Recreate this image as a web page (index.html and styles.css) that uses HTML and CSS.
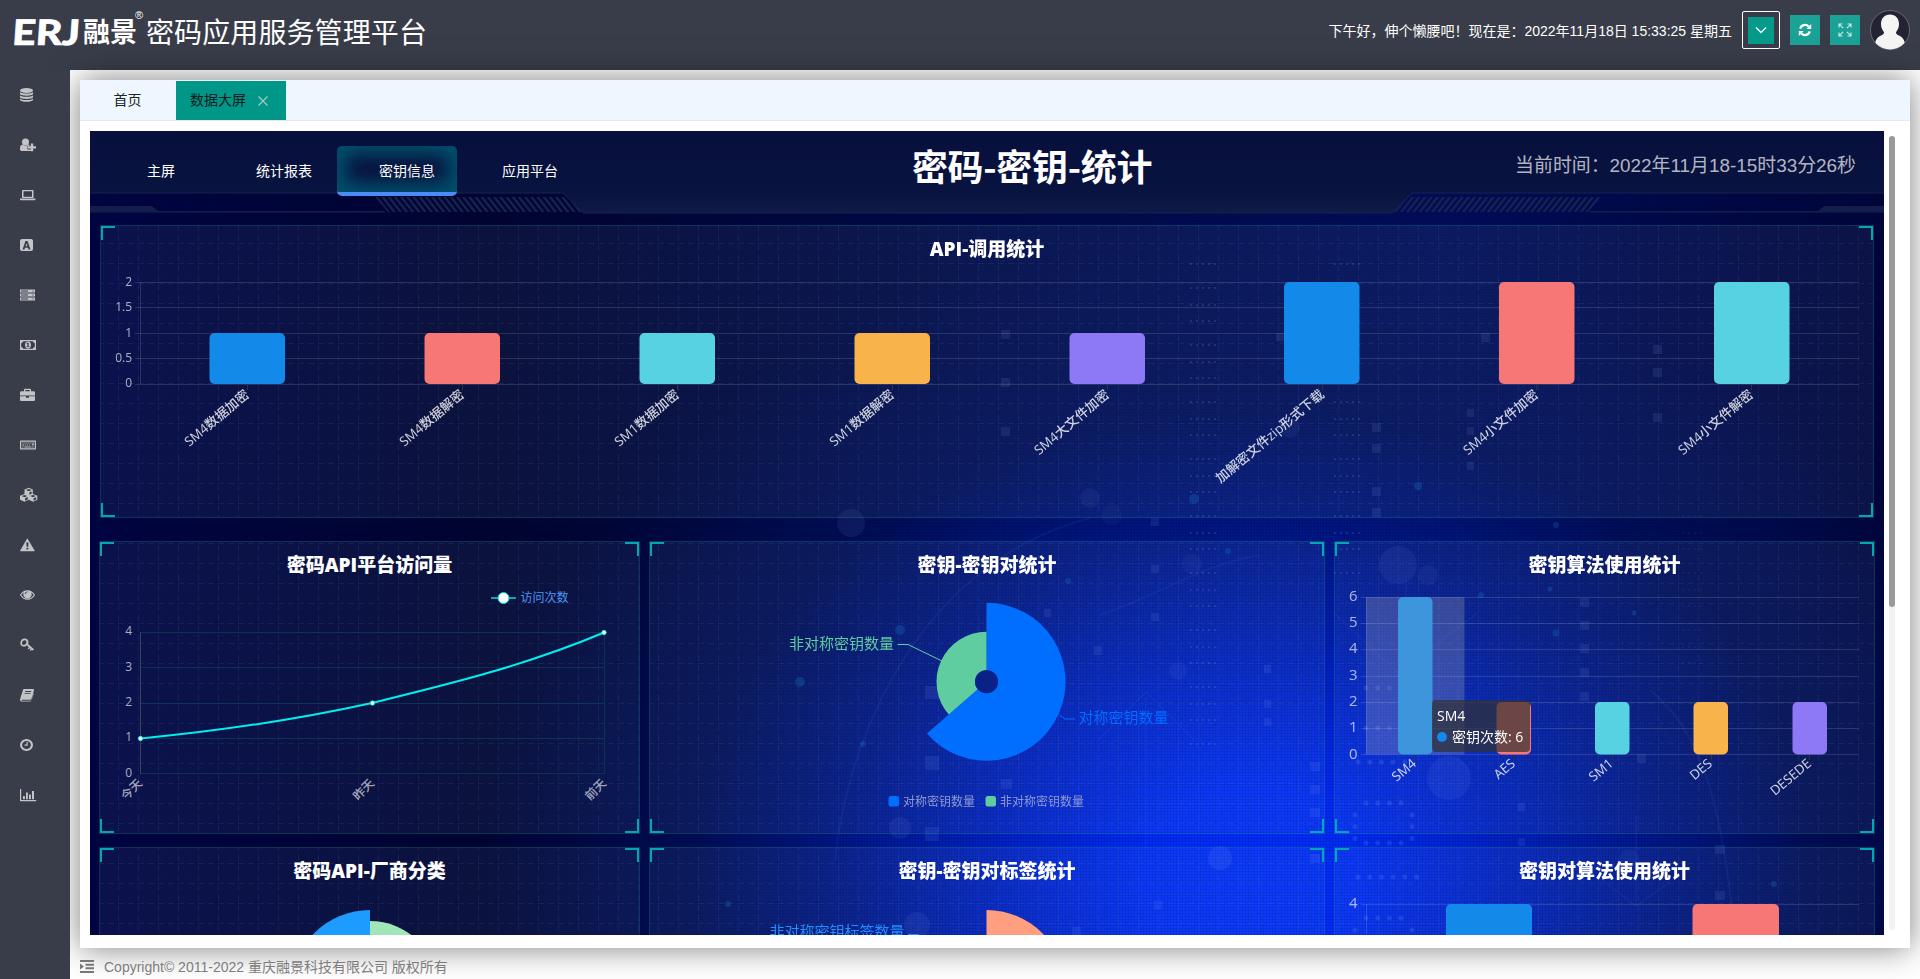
FILE: index.html
```html
<!DOCTYPE html>
<html lang="zh-CN">
<head>
<meta charset="utf-8">
<title>密码应用服务管理平台</title>
<link rel="stylesheet" href="styles.css">
</head>
<body>
<header class="topbar">
  <div class="logo"><span class="logo-erj">ERJ</span><span class="logo-cn">融景</span><sup class="logo-reg">®</sup><span class="logo-name">密码应用服务管理平台</span></div>
  <div class="tools">
    <span class="greeting">下午好，伸个懒腰吧！现在是：2022年11月18日 15:33:25 星期五</span>
    <span class="btn-outline"><span class="btn-inner"><svg width="14" height="14" viewBox="0 0 14 14"><path d="M2 4.5l5 5 5-5" fill="none" stroke="#fff" stroke-width="1.3"/></svg></span></span>
    <span class="btn"><svg width="14" height="14" viewBox="0 0 14 14"><path d="M2.2 5.6A5 5 0 0 1 10.6 3.4M11.8 8.4A5 5 0 0 1 3.4 10.6" fill="none" stroke="#fff" stroke-width="2.2"/><path d="M13.2 1v5H8.2zM.8 13V8h5z" fill="#fff"/></svg></span>
    <span class="btn"><svg width="14" height="14" viewBox="0 0 14 14"><path d="M1 4.5V1h3.5M9.5 1H13v3.500M13 9.500V13H9.500M4.500 13H1V9.500M1.300 1.300l3.800 3.800M12.700 1.300L8.900 5.100M12.700 12.700L8.900 8.900M1.300 12.700l3.800-3.800" fill="none" stroke="#c9f0ea" stroke-width="1.1"/></svg></span>
    <svg class="avatar" viewBox="0 0 40 40"><defs><clipPath id="av"><circle cx="20" cy="20" r="19.500"/></clipPath></defs><circle cx="20" cy="20" r="19.500" fill="#232334" stroke="#73757f" stroke-width=".8"/><g fill="#f5f5f5" clip-path="url(#av)"><path d="M20 4.500c5.500 0 9 4 9 9.500 0 4-1.500 6-3 8.200 0 1.500.8 2.300 2.500 3 4 1.600 6.500 5 6.500 10V40H5v-4.800c0-5 2.500-8.400 6.500-10 1.700-.7 2.500-1.500 2.500-3-1.500-2.200-3-4.200-3-8.200 0-5.500 3.500-9.500 9-9.500z"/></g></svg>
  </div>
</header>
<div class="body">
  <nav class="sidebar">
    <svg viewBox="0 0 18 16"><ellipse cx="6.500" cy="3.500" rx="6.500" ry="2.500"/><path d="M0 5c1.500 2 11.500 2 13 0v2c-1 2.200-12 2.200-13 0zM0 8.300c1.500 2 11.500 2 13 0v2c-1 2.200-12 2.200-13 0zM0 11.600c1.500 2 11.500 2 13 0V13c-1 2.400-12 2.400-13 0z"/></svg>
    <svg viewBox="0 0 18 16"><circle cx="5.500" cy="5" r="3.500"/><path d="M2.500 7.500c2 1.800 4 1.800 6 0 .8.200 1 .8 1.200 1.500H7.500v3.500H11V14H1.500C.3 14-.1 13 0 11.500c.1-2 .8-3.800 2.500-4zM10.800 6.500h2.400v2.800h2.800v2.200h-2.800v2.800h-2.400v-2.800H8V9.300h2.800z"/></svg>
    <svg viewBox="0 0 18 16"><path fill-rule="evenodd" d="M3 3h9.500c.6 0 1 .4 1 1v7H2V4c0-.6.400-1 1-1zm.5 1.300v5.500H12V4.300zM0 11.500h15.500v1c0 .500-.6.800-1.200.8H1.200c-.6 0-1.200-.3-1.200-.8z"/></svg>
    <svg viewBox="0 0 18 16"><path fill-rule="evenodd" d="M2 2h9c1.200 0 2 .8 2 2v8c0 1.200-.8 2-2 2H2c-1.200 0-2-.8-2-2V4c0-1.200.8-2 2-2zm3.500 2L2.500 12.500h2l.5-1.700h3l.5 1.700h2L7.500 4zm1 2.200l.9 3h-1.800z"/></svg>
    <svg viewBox="0 0 18 16"><path fill-rule="evenodd" d="M0 2.500h15v3H0zm1 1v1h7v-1zm11.500 0v1h1v-1zM0 6.500h15v3H0zm1 1v1h7v-1zm11.500 0v1h1v-1zM0 10.500h15v3H0zm1 1v1h7v-1zm11.500 0v1h1v-1z"/></svg>
    <svg viewBox="0 0 18 16"><path fill-rule="evenodd" d="M0 3h16v10H0zm3 1.200C3 5.300 2.200 6 1.200 6v4c1 0 1.800.7 1.800 1.800h10c0-1.100.8-1.800 1.800-1.800V6c-1 0-1.800-.7-1.800-1.800z"/><path fill-rule="evenodd" d="M8 4.500c1.900 0 3 1.500 3 3.500s-1.100 3.500-3 3.500S5 10 5 8s1.100-3.500 3-3.500zm-.6 1.300l-1 .9.500.6.500-.3v2.200h-.8v.8h2.800v-.8h-.8V5.800z"/></svg>
    <svg viewBox="0 0 18 16"><path fill-rule="evenodd" d="M5 1.800h5c.6 0 1 .4 1 1v1.400h2.600c.8 0 1.400.6 1.400 1.300V8.500H0v-3c0-.7.600-1.300 1.400-1.300H4V2.800c0-.6.400-1 1-1zm.3 1.200v1.200h4.400V3zM0 9.300h6v1.400h3V9.300h6v3.400c0 .7-.6 1.300-1.400 1.300H1.400C.6 14 0 13.400 0 12.700z"/></svg>
    <svg viewBox="0 0 18 16"><path fill-rule="evenodd" d="M1 3.500h14c.6 0 1 .4 1 1v7c0 .6-.4 1-1 1H1c-.6 0-1-.4-1-1v-7c0-.6.400-1 1-1zm.2 1.200v6.600h13.600V4.700zM2.300 5.500h1.200v1H2.300zm2 0h1.200v1H4.300zm2 0h1.200v1H6.300zm2 0h1.200v1H8.300zm2 0h1.200v1h-1.200zm2 0h1.400v3h-2v-1h.8zM2.300 7.500h1.700v1H2.300zm2.400 0h1.200v1H4.700zm2 0h1.200v1H6.700zm2 0h1.200v1H8.700zM2.300 9.500h1.200v1H2.300zm2 0h7.200v1H4.300zm8 0h1.400v1h-1.400z"/></svg>
    <svg viewBox="0 0 18 16"><path fill-rule="evenodd" d="M8.800.8l4 1.700v4.400l4.500 1.900v4l-4.300 2-4.200-2-4.300 2-4.500-2v-4l4.500-1.900V2.500zm0 1.100L6 3l2.800 1.200L11.600 3zm.6 3.400v2.500l2.200-1V4.400zM4.500 8L1.800 9.100l2.700 1.200 2.800-1.200zm.6 3.300v2.500l2.700-1.300v-2.400zM13 8l-2.800 1.100 2.800 1.200 2.700-1.200zm.6 3.300v2.500l2.500-1.300v-2.300z"/></svg>
    <svg viewBox="0 0 18 16"><path fill-rule="evenodd" d="M7.300 1.200L14.600 13.500c.2.500 0 .8-.5.800H.7c-.500 0-.8-.3-.5-.8zM6.300 5.500l.3 4.200h1.600l.3-4.200zm.2 5.300v1.700h1.800v-1.700z"/></svg>
    <svg viewBox="0 0 18 16"><path fill-rule="evenodd" d="M7.500 3.200c3.300 0 5.800 2 7.500 4.800-1.700 2.800-4.200 4.800-7.500 4.800S1.700 10.800 0 8c1.700-2.800 4.200-4.800 7.500-4.800zM4 5.300C2.800 6 2 6.900 1.300 8c1.400 2.200 3.500 3.700 6.200 3.700s4.800-1.500 6.200-3.700c-.7-1.100-1.500-2-2.700-2.700.5.700.7 1.400.7 2.200 0 2.300-1.900 4-4.200 4s-4.200-1.700-4.200-4c0-.8.200-1.500.7-2.200zm3.500-.8c-1.500 0-2.800 1.200-2.800 2.800h.8c0-1.100.9-2 2-2z"/></svg>
    <svg viewBox="0 0 18 16"><path fill-rule="evenodd" d="M4.500 1.500c2.500 0 4 1.600 4 3.600 0 .8-.2 1.300-.5 1.900l6 5.200-1.200 1.300-1-.8-1.100 1.400-1-.9 1-1.300-.8-.7-1.200 1.300-1-.8 1.200-1.400-2.200-2c-.6.800-1.400 1.300-2.500 1.300C2.200 9.600.3 8.500.3 6.200c0-2.700 1.900-4.700 4.200-4.700zm.2 1.700c-1.500 0-2.800 1.400-2.700 3 0 1 .7 1.700 1.600 1.700 1.500 0 2.900-1.500 2.900-3 0-1-.8-1.700-1.800-1.700z"/></svg>
    <svg viewBox="0 0 18 16"><path fill-rule="evenodd" d="M4.500 2h8.300c1 0 1.400.7 1.100 1.600l-2.500 8.200c-.2.700-.8 1-1.500 1H2c-.4 0-.7.200-.6.500.1.300.4.400.8.400h8.300c.6 0 .9-.3 1-.8L13.300 6c.4.400.4.900.2 1.500l-2 5.700c-.3.900-.9 1.300-1.800 1.300H2c-1.400 0-2.400-1-1.900-2.400L2.800 3.400C3 2.500 3.600 2 4.500 2zm.9 2l-.3.900h6l.3-.9zm-.7 2.200l-.3.900h6l.3-.9z"/></svg>
    <svg viewBox="0 0 18 16"><path fill-rule="evenodd" d="M6.500 2a6.500 6 0 1 1 0 12 6.500 6 0 0 1 0-12zm0 2a4.400 4 0 1 0 0 8 4.400 4 0 0 0 0-8zm0 1h1.200v3.700H4.500V7.500h2z"/></svg>
    <svg viewBox="0 0 18 16"><path d="M0 2h1.200v11h15v1.200H0zM3 9h1.900v3.200H3zM6 5.500h1.900v6.700H6zM9 7.500h1.900v4.700H9zM12 4h2v8.200h-2z"/></svg>
  </nav>
  <main class="main">
    <section class="card">
      <div class="tabs">
        <span class="tab">首页</span>
        <span class="tab tab-on">数据大屏<svg width="10" height="10" viewBox="0 0 10 10"><path d="M.5.5l9 9M9.500.5l-9 9" stroke="#a9c9c4" stroke-width="1.200"/></svg></span>
      </div>
      <div class="frame">
        <div class="dash">
          <svg class="decor" viewBox="90 131 1794 804">
            <defs>
              <pattern id="hl" width="6.200" height="14" patternUnits="userSpaceOnUse" patternTransform="translate(375 197) skewX(38)"><rect width="3" height="14" fill="#182250"/></pattern>
              <pattern id="hr" width="6.200" height="14" patternUnits="userSpaceOnUse" patternTransform="translate(1399 197) skewX(-38)"><rect width="3" height="14" fill="#182250"/></pattern>
              <pattern id="dots" width="6" height="57" patternUnits="userSpaceOnUse"><path d="M2 3h2M2 20h2M2 36h2" stroke="#8fb0ff" stroke-width="2" opacity=".15"/></pattern>
              <pattern id="mesh" width="20" height="20" patternUnits="userSpaceOnUse" patternTransform="translate(98 243)"><path d="M0 .5h6M10 .5h6M.5 2v6M.5 12v6" stroke="#8db4ff" stroke-width="1"/></pattern>
              <linearGradient id="hd" x1="0" y1="0" x2="0" y2="1"><stop offset="0" stop-color="#07103c"/><stop offset=".75" stop-color="#09133f"/><stop offset="1" stop-color="#101a48"/></linearGradient>
            </defs>
            <path d="M101 226H1873V517H101zM100 542H639V832H100zM650 542H1324V832H650zM1335 542H1874V832H1335zM100 848H639V935H100zM650 848H1324V935H650zM1335 848H1874V935H1335z" fill="url(#mesh)" opacity=".085"/>
            <g fill="#9db8ff" opacity=".1">
              <path d="M1001 330h9v9h-9zM1001 378h9v9h-9zM1001 427h9v9h-9zM1481 333h9v9h-9zM1653 345h9v9h-9zM1653 368h9v9h-9zM1653 413h9v9h-9zM1372 423h9v9h-9zM1372 444h9v9h-9zM1372 487h9v9h-9zM1372 508h9v9h-9zM1467 409h7v8h-7zM1467 427h7v8h-7zM1467 462h7v8h-7zM1276 333h8v8h-8z"/>
              <path d="M1151 518h8v8h-8zM1151 565h8v8h-8zM1151 613h8v8h-8zM1094 646h8v9h-8zM1044 609h7v8h-7zM925 686h14v13h-14zM925 756h14v14h-14zM1001 779h11v10h-11zM925 827h14v14h-14zM1264 665h7v8h-7zM1264 700h7v8h-7zM1264 718h7v8h-7zM1580 598h9v9h-9zM1580 621h9v9h-9zM1580 644h9v9h-9zM1580 668h9v9h-9zM1580 692h9v9h-9zM1637 754h9v9h-9zM1310 762h10v9h-10zM1310 785h10v9h-10zM1310 808h10v9h-10zM1310 854h10v9h-10zM1518 803h7v8h-7zM1518 838h7v8h-7zM1715 845h10v9h-10zM1715 891h10v9h-10zM1154 901h8v8h-8zM1072 927h9v8h-9z"/>
              <circle cx="851" cy="523" r="14" opacity=".8"/><circle cx="1398" cy="565" r="19" opacity=".7"/><circle cx="1428" cy="575" r="10" opacity=".6"/><circle cx="1449" cy="778" r="22" opacity=".8"/><circle cx="1220" cy="858" r="12"/><circle cx="900" cy="828" r="11" opacity=".8"/><circle cx="917" cy="925" r="13" opacity=".8"/><circle cx="1178" cy="671" r="9" opacity=".6"/><circle cx="1192" cy="564" r="10" opacity=".5"/><circle cx="1290" cy="428" r="10" opacity=".6"/><circle cx="1090" cy="498" r="10" opacity=".6"/><circle cx="1629" cy="858" r="9" opacity=".6"/><circle cx="1112" cy="515" r="10" opacity=".4"/>
            </g>
            <g fill="#128fd0" opacity=".22"><circle cx="1418" cy="486" r="4"/><circle cx="1194" cy="499" r="5"/><circle cx="1556" cy="525" r="3"/><circle cx="1556" cy="633" r="3.500"/><circle cx="900" cy="630" r="5"/><circle cx="800" cy="682" r="5"/><circle cx="863" cy="744" r="3"/><circle cx="1550" cy="589" r="2.500"/><circle cx="1634" cy="613" r="2.500"/><circle cx="1481" cy="595" r="3"/><circle cx="1774" cy="884" r="3"/><circle cx="728" cy="904" r="3"/><circle cx="1068" cy="581" r="3"/><circle cx="1228" cy="551" r="3"/></g>
            <g fill="url(#dots)"><rect x="1187" y="260" width="33" height="495"/><rect x="1330" y="252" width="30" height="325"/><rect x="1682" y="494" width="22" height="170" opacity=".4"/></g>
            <g fill="none" stroke="#9db8ff" stroke-width="5" stroke-linecap="round" stroke-dasharray="0 11.700" opacity=".14"><path d="M1366 688h36M1366 728h36M1358 762h48M1366 803h36M1355 815v34M1412 815v34M1366 843h36M1358 877h60M1366 918h36M1355 930h1M1412 930h1"/></g>
            <g fill="none" stroke="#5a8cff" opacity=".13"><path d="M1146 697v152M1098 740l48-48 48 48M1406 580v40M1332 611l66 62 82-62M1636 816v90l-34-26M1636 906l34-24"/><path d="M835 860C850 720 930 560 1090 518M1100 615c60-20 100-50 160-60M1650 690c50 40 70 110 82 220" stroke-width="2" opacity=".6"/></g>
            <path d="M90 131H1884V193H1412L1392 213H583L563 193H90z" fill="url(#hd)"/>
            <path d="M90 193H563L583 213H1392L1412 193H1884" fill="none" stroke="#19234f"/>
            <path d="M375 197H566L582 212H388z" fill="url(#hl)"/><path d="M1408 197H1601L1588 212H1394z" fill="url(#hr)"/>
            <path d="M90 206h62l6 5h227v1.500H90zM1884 206h-60l-6 5h-228v1.500h294z" fill="#141e4c"/>
          </svg>
          <div class="dash-head">
            <div class="menu"><span>主屏</span><span>统计报表</span><span class="on">密钥信息</span><span>应用平台</span></div>
            <h1>密码-密钥-统计</h1>
            <div class="clock">当前时间：2022年11月18-15时33分26秒</div>
          </div>

          <div class="panel panel-wide"><i></i><b></b>
            <h3>API-调用统计</h3>
            <svg class="chart" viewBox="101 272 1772 245" width="1772" height="245">
              <path class="grid" d="M135 282.500H1859M135 307.500H1859M135 333.500H1859M135 358.500H1859M135 384.500H1859M140.500 282V384"/>
              <path class="tick" d="M247.500 385v5M462.500 385v5M677.500 385v5M892.500 385v5M1107.500 385v5M1322.500 385v5M1536.500 385v5M1751.500 385v5"/>
              <g class="ylab"><text x="132" y="285.500">2</text><text x="132" y="311">1.5</text><text x="132" y="336.500">1</text><text x="132" y="362">0.5</text><text x="132" y="387">0</text></g>
              <rect x="209.500" y="333" width="75.500" height="51" rx="5" fill="#138aea"/><rect x="424.500" y="333" width="75.500" height="51" rx="5" fill="#f67776"/><rect x="639.500" y="333" width="75.500" height="51" rx="5" fill="#57d2e3"/><rect x="854.500" y="333" width="75.500" height="51" rx="5" fill="#f8b34b"/><rect x="1069.500" y="333" width="75.500" height="51" rx="5" fill="#8d79f6"/><rect x="1284" y="282" width="75.500" height="102" rx="5" fill="#138aea"/><rect x="1499" y="282" width="75.500" height="102" rx="5" fill="#f67776"/><rect x="1714" y="282" width="75.500" height="102" rx="5" fill="#57d2e3"/>
              <g class="xlab">
                <text transform="translate(250 396) rotate(-40)">SM4数据加密</text><text transform="translate(465 396) rotate(-40)">SM4数据解密</text><text transform="translate(680 396) rotate(-40)">SM1数据加密</text><text transform="translate(895 396) rotate(-40)">SM1数据解密</text><text transform="translate(1110 396) rotate(-40)">SM4大文件加密</text><text transform="translate(1325 396) rotate(-40)">加解密文件zip形式下载</text><text transform="translate(1539 396) rotate(-40)">SM4小文件加密</text><text transform="translate(1754 396) rotate(-40)">SM4小文件解密</text>
              </g>
            </svg>
          </div>

          <div class="row">
            <div class="panel"><i></i><b></b>
              <h3>密码API平台访问量</h3>
              <svg class="chart" viewBox="100 590 539 242" width="539" height="242">
                <path d="M140 632.500H604.500V773.500H140M140 667.500H604M140 703.500H604M140 738.500H604" fill="none" stroke="#0d3b55" opacity=".8"/><path d="M140.500 632V774" stroke="#3b4450"/>
                <path d="M491 598h25" stroke="#00a9b5" stroke-width="2"/><circle cx="503.500" cy="598" r="5.500" fill="#fff" stroke="#00d5d5"/>
                <text x="520.500" y="601.500" class="legend" fill="#4c97f5">访问次数</text>
                <g class="ylab"><text x="132" y="635">4</text><text x="132" y="670.500">3</text><text x="132" y="705.500">2</text><text x="132" y="741">1</text><text x="132" y="777">0</text></g>
                <path d="M140.500 738.500C218 731 295 720 372 703C450 684 527 665 604 632.500" fill="none" stroke="#00efef" stroke-width="2"/>
                <g fill="#fff" stroke="#00efef" stroke-width=".8"><circle cx="140.500" cy="738.500" r="2.200"/><circle cx="372.500" cy="703" r="2.200"/><circle cx="604" cy="632.500" r="2.200"/></g>
                <g class="xlab xlab-thin"><text transform="translate(143 784) rotate(-45)">今天</text><text transform="translate(375 784) rotate(-45)">昨天</text><text transform="translate(607 784) rotate(-45)">前天</text></g>
              </svg>
            </div>
            <div class="panel"><i></i><b></b>
              <h3>密钥-密钥对统计</h3>
              <svg class="chart" viewBox="650 590 674 242" width="674" height="242">
                <path d="M986.500 602.700A79 79 0 1 1 926.900 733.500L977.800 689.200A11.500 11.500 0 1 0 986.500 670.200z" fill="#006eff"/>
                <path d="M986.500 631.700A50 50 0 0 0 948.800 714.500L977.800 689.200A11.500 11.500 0 0 1 986.500 670.200z" fill="#60cda0"/>
                <circle cx="986.500" cy="681.700" r="11.500" fill="#0a2287"/>
                <path d="M897.500 644.500h10.500l34 16.500" fill="none" stroke="#60cda0"/><path d="M1059.500 715l5.500 4h10" fill="none" stroke="#006eff"/>
                <text x="789" y="649" class="plab" fill="#60cda0">非对称密钥数量</text><text x="1078.500" y="723" class="plab" fill="#006eff">对称密钥数量</text>
                <rect x="888.500" y="796" width="10.500" height="10.500" rx="2.500" fill="#006eff"/><rect x="985.500" y="796" width="10.500" height="10.500" rx="2.500" fill="#60cda0"/>
                <text x="903" y="805.500" class="legend" fill="#8f9bd0">对称密钥数量</text><text x="1000" y="805.500" class="legend" fill="#8f9bd0">非对称密钥数量</text>
              </svg>
            </div>
            <div class="panel"><i></i><b></b>
              <h3>密钥算法使用统计</h3>
              <svg class="chart" viewBox="1335 590 539 242" width="539" height="242">
                <path class="grid" d="M1361 597.500H1859M1361 623.500H1859M1361 649.500H1859M1361 676.500H1859M1361 702.500H1859M1361 728.500H1859M1361 754.500H1859M1366.500 597V754"/>
                <path class="tick" d="M1415.500 755v5M1514.500 755v5M1612.500 755v5M1711.500 755v5M1809.500 755v5"/>
                <g class="ylab ylab-lg"><text x="1357.500" y="601">6</text><text x="1357.500" y="627">5</text><text x="1357.500" y="653">4</text><text x="1357.500" y="680">3</text><text x="1357.500" y="706">2</text><text x="1357.500" y="732">1</text><text x="1357.500" y="758.500">0</text></g>
                <rect x="1398" y="597" width="34.500" height="157.500" rx="5" fill="#138aea"/><rect x="1366" y="597" width="98.500" height="157.500" fill="#b4b4b4" opacity=".26"/>
                <rect x="1496.500" y="702" width="34.500" height="52.500" rx="5" fill="#f67776"/><rect x="1595" y="702" width="34.500" height="52.500" rx="5" fill="#57d2e3"/><rect x="1693.500" y="702" width="34.500" height="52.500" rx="5" fill="#f8b34b"/><rect x="1792.500" y="702" width="34.500" height="52.500" rx="5" fill="#8d79f6"/>
                <g class="xlab"><text transform="translate(1417 765) rotate(-40)">SM4</text><text transform="translate(1516 765) rotate(-40)">AES</text><text transform="translate(1614 765) rotate(-40)">SM1</text><text transform="translate(1713 765) rotate(-40)">DES</text><text transform="translate(1812 765) rotate(-40)">DESEDE</text></g>
              </svg>
              <div class="tooltip"><div>SM4</div><div><em></em>密钥次数: 6</div></div>
            </div>
          </div>

          <div class="row row-last">
            <div class="panel"><i></i><b></b>
              <h3>密码API-厂商分类</h3>
              <svg class="chart" viewBox="100 896 539 242" width="539" height="242"><path d="M370 910A79 79 0 0 0 291 989H370z" fill="#1e9bff"/><path d="M370 921A68 68 0 0 1 438 989H370z" fill="#9fe6b8"/></svg>
            </div>
            <div class="panel"><i></i><b></b>
              <h3>密钥-密钥对标签统计</h3>
              <svg class="chart" viewBox="650 896 674 242" width="674" height="242"><path d="M986.500 910A79 79 0 0 1 1065.500 989H986.500z" fill="#ff9f7f"/><path d="M908 934.500h10l20 12" fill="none" stroke="#1e90ff"/><text x="769.500" y="936.500" class="plab" fill="#1e90ff">非对称密钥标签数量</text></svg>
            </div>
            <div class="panel"><i></i><b></b>
              <h3>密钥对算法使用统计</h3>
              <svg class="chart" viewBox="1335 896 539 242" width="539" height="242"><path class="grid" d="M1361 904.500H1859M1366.500 904V1060"/><g class="ylab ylab-lg"><text x="1357.500" y="908">4</text></g><rect x="1446" y="904" width="86" height="150" rx="5" fill="#138aea"/><rect x="1692.500" y="904" width="86.500" height="150" rx="5" fill="#f67776"/></svg>
            </div>
          </div>
        </div>
        <div class="scroll"><div class="thumb"></div></div>
      </div>
    </section>
    <footer class="foot"><svg width="14" height="13" viewBox="0 0 14 13"><path d="M0 0h14v2H0zM5.500 3.700H14v2H5.500zM5.500 7.300H14v2H5.500zM0 11h14v2H0zM0 3.500l4 3-4 3z"/></svg><span>Copyright© 2011-2022 重庆融景科技有限公司 版权所有</span></footer>
  </main>
</div>
</body>
</html>
```
FILE: styles.css
```css
* { box-sizing: border-box; }
body { margin: 0; height: 979px; overflow: hidden; background: #fff; font: 14px "Liberation Sans", "Noto Sans CJK SC", sans-serif; color: #333; display: flex; flex-direction: column; }

.topbar { height: 70px; flex: none; background: #393d49; display: flex; justify-content: space-between; padding: 0 10px 0 12px; color: #fff; }
.logo { display: flex; align-items: center; height: 62px; white-space: nowrap; }
.logo-erj { font: 900 35px/64px Lato, "Open Sans", sans-serif; width: 71px; transform: skewX(-4deg) scaleX(1.17); transform-origin: 0 60%; -webkit-text-stroke: .6px #fff; }
.logo-cn { font: 700 27px/64px "Noto Sans CJK SC", sans-serif; width: 54px; }
.logo-reg { font-size: 11px; line-height: 12px; align-self: flex-start; margin-top: 9px; width: 9px; margin-left: -2px; }
.logo-name { font: 400 28px/64px "Noto Sans CJK SC", sans-serif; margin-left: 2px; letter-spacing: .1px; }
.tools { display: flex; align-items: center; height: 60px; }
.greeting { margin-right: 10px; line-height: 20px; padding-top: 1px; white-space: nowrap; }
.btn-outline { width: 38px; height: 38px; border: 1px solid #fff; border-radius: 2px; display: flex; align-items: center; justify-content: center; margin-right: 10px; }
.btn-inner { width: 26px; height: 27px; background: #069a8b; display: flex; align-items: center; justify-content: center; }
.btn { width: 30px; height: 30px; background: #1ba196; display: flex; align-items: center; justify-content: center; margin-right: 10px; }
.avatar { width: 40px; height: 40px; }

.body { flex: 1; display: flex; min-height: 0; }
.sidebar { width: 70px; flex: none; background: #393d49; display: flex; flex-direction: column; position: relative; z-index: 2; }
.sidebar svg { width: 18px; height: 16px; margin: 17px 0 17px 20px; fill: #c3c4c8; flex: none; }
.main { flex: 1; padding: 10px 10px 0; display: flex; flex-direction: column; min-width: 0; }
.card { height: 868px; flex: none; background: #fff; box-shadow: 0 0 30px rgba(0, 0, 0, .5); }
.tabs { height: 41px; background: #eef7ff; border-bottom: 1px solid #e8e8e8; display: flex; }
.tab { width: 96px; padding-left: 33.5px; line-height: 40px; color: #222; }
.tab-on { width: 110px; height: 39px; margin-top: 1px; background: #009688; padding-left: 14px; color: #10201e; line-height: 38px; white-space: nowrap; }
.tab-on svg { margin-left: 12px; vertical-align: -1px; }
.frame { display: flex; padding: 10px 15px 0 10px; }

.dash { position: relative; width: 1794px; height: 804px; overflow: hidden;
  background:
    repeating-linear-gradient(0deg, rgba(0, 0, 20, .12) 0 1px, transparent 1px 3px),
    repeating-linear-gradient(90deg, rgba(0, 0, 20, .12) 0 1px, transparent 1px 3px),
    radial-gradient(ellipse 780px 650px at 1160px 745px, #0030ff 0, #002cfa 14%, #0021c2 34%, #001684 54%, rgba(0, 14, 92, .8) 72%, rgba(0, 8, 60, 0) 100%),
    linear-gradient(90deg, #000445 0, #000432 22%, #000a4a 50%, #000d5c 75%, #00053c 100%);
  color: #fff; }
.decor { position: absolute; left: 0; top: 0; width: 1794px; height: 804px; }
.dash-head { position: relative; height: 94px; display: flex; }
.menu { display: flex; gap: 3px; padding: 15px 0 0 1px; width: 700px; }
.menu span { width: 120px; height: 50px; line-height: 50px; padding-left: 20px; text-align: center; border-radius: 5px; }
.menu .on { border-bottom: 4px solid #4b8bf7; box-shadow: inset 0 0 18px 9px #00506e; }
h1 { margin: 0; width: 484px; text-align: center; font: 700 36px/69px "Noto Sans CJK SC", sans-serif; letter-spacing: -.3px; }
.clock { flex: 1; text-align: right; padding-right: 28px; font-size: 18.900px; line-height: 69px; color: rgba(255, 255, 255, .7); white-space: nowrap; }

.panel { position: relative; height: 293px; border: 1px solid rgba(25, 186, 139, .2); background: rgba(170, 230, 255, .065); }
.panel i::before, .panel i::after, .panel b::before, .panel b::after { content: ""; position: absolute; width: 12px; height: 12px; border: 0 solid #02a6b5; }
.panel i::before { left: 0; top: 0; border-width: 2px 0 0 2px; }
.panel i::after { right: 0; top: 0; border-width: 2px 2px 0 0; }
.panel b::before { left: 0; bottom: 0; border-width: 0 0 2px 2px; }
.panel b::after { right: 0; bottom: 0; border-width: 0 2px 2px 0; }
.panel-wide { margin: 0 10px; }
.row { display: grid; grid-template-columns: 541px 676px 541px; gap: 9px; margin: 23px 9px 0; }
.row-last { margin-top: 13px; }
h3 { position: relative; margin: 0; height: 48px; text-align: center; font: 800 19px/47px "Open Sans", "Noto Sans CJK SC", sans-serif; }
.panel-wide h3 { height: 46px; line-height: 46.5px; }
.chart { display: block; position: relative; overflow: visible; font-family: "Open Sans", "Noto Sans CJK SC", sans-serif; }
.grid { fill: none; stroke: rgba(255, 255, 255, .13); }
.tick { stroke: #333; }
.ylab { font-size: 12px; text-anchor: end; fill: rgba(255, 255, 255, .66); }
.ylab-lg { font-size: 15px; }
.xlab { font-size: 13.200px; text-anchor: end; fill: rgba(255, 255, 255, .8); font-weight: 500; }
.xlab-thin { font-size: 12px; fill: rgba(255, 255, 255, .65); }
.legend { font-size: 12px; }
.plab { font-size: 15px; }
.tooltip { position: absolute; left: 97px; top: 158px; width: 98px; height: 52px; padding: 5px; border-radius: 4px; background: rgba(50, 50, 50, .7); font: 14px/21px "Open Sans", "Noto Sans CJK SC", sans-serif; white-space: nowrap; }
.tooltip em { display: inline-block; width: 10px; height: 10px; border-radius: 5px; background: #138aea; margin-right: 5px; }

.scroll { width: 6px; height: 794px; margin: 5px 0 0 5px; background: #f1f1f1; border-radius: 3px; }
.thumb { height: 471px; background: #999; border-radius: 3px; }
.foot { position: relative; height: 31px; margin-top: 5px; display: flex; align-items: center; gap: 10px; color: #7d7d7d; }
.foot svg { fill: #777; }
```
